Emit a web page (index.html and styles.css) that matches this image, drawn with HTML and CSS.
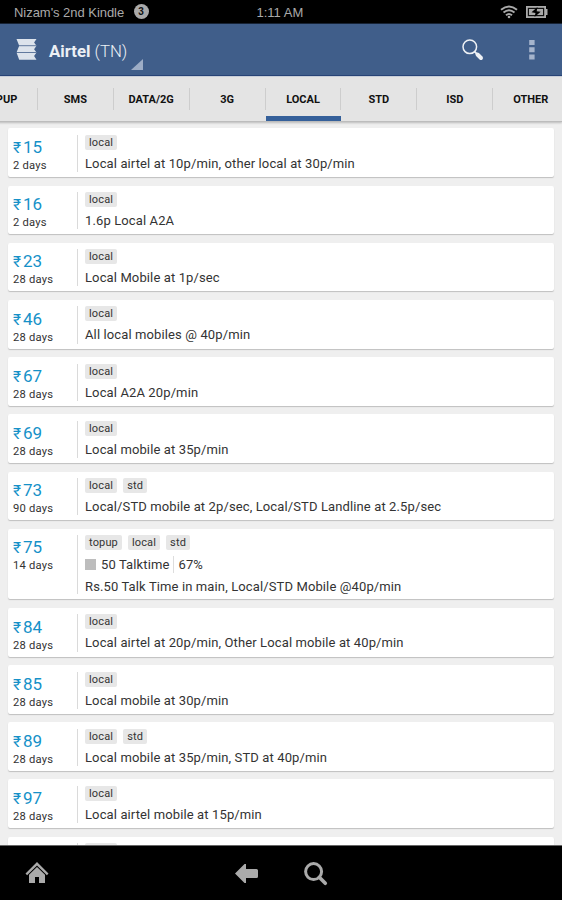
FILE: index.html
```html
<!DOCTYPE html>
<html lang="en">
<head>
<meta charset="utf-8">
<title>Airtel (TN)</title>
<link rel="stylesheet" href="styles.css">
</head>
<body>
<header class="status">
  <span class="device">Nizam's 2nd Kindle</span><span class="count">3</span>
  <span class="time">1:11 AM</span>
  <svg class="wifi" width="18" height="14" viewBox="0 0 18 14" fill="none" stroke="#aaa" stroke-width="1.9"><path d="M1 4.800Q9-2 17 4.800M3.500 7.600Q9 3 14.500 7.600M6 10.200Q9 7.600 12 10.200"/><circle cx="9" cy="12" r="1.3" fill="#aaa" stroke="none"/></svg>
  <svg class="battery" width="22" height="12" viewBox="0 0 22 12"><path fill="#aaa" d="M0 0h20v3h1.500v6H20v3H0z"/><path d="M1.800 1.800h16.400v8.400H1.800z" fill="#111"/><path d="M3 3h14v6H3z" fill="#aaa"/><path d="M11.500 1 5.500 6.300l4 .6L8.500 11l6.200-5.200-4-.6z" fill="#000"/></svg>
</header>
<nav class="bar">
  <svg class="logo" width="21" height="21" viewBox="0 0 21 21"><path fill="#dce3ec" d="M.5 0h20l-2.400 3.500 2.400 3.200-2.400 3.500 2.400 3.200-2.400 3.600 2.400 3.700H3.200L.5 13.500l2.700-6.800z"/><path d="M2 6.700h18.500M0 13.500h20.500" stroke="#405e8a" stroke-width=".8"/></svg>
  <h1 class="title"><b>Airtel</b> (TN)</h1>
  <svg class="spinner" width="12" height="12" viewBox="0 0 12 12"><path d="M12 0v11H0z" fill="#9dadc6"/></svg>
  <svg class="search" width="22" height="22" viewBox="0 0 22 22" fill="none" stroke="#eef1f5"><circle cx="7.800" cy="7.800" r="6.800" stroke-width="1.500"/><path d="m12.600 12.600 2.500 2.500" stroke-width="1.800"/><path d="m15.500 15.500 3.500 3.500" stroke-width="4" stroke-linecap="round"/></svg>
  <svg class="more" width="6" height="20" viewBox="0 0 6 20" fill="#a5b4cc"><path d="M.2 0h5.400v5H.2zM.2 7.200h5.400v5H.2zM.2 14.400h5.400v5H.2z"/></svg>
</nav>
<div class="tabs">
  <div class="tab"><span>TOPUP</span></div><div class="tab"><span>SMS</span></div><div class="tab"><span>DATA/2G</span></div><div class="tab"><span>3G</span></div><div class="tab active"><span>LOCAL</span></div><div class="tab"><span>STD</span></div><div class="tab"><span>ISD</span></div><div class="tab"><span>OTHER</span></div>
</div>
<main class="list">
  <article class="card"><div class="price"><b><i>₹</i>15</b><small>2 days</small></div><div class="info"><div class="tags"><span>local</span></div><p>Local airtel at 10p/min, other local at 30p/min</p></div></article>
  <article class="card"><div class="price"><b><i>₹</i>16</b><small>2 days</small></div><div class="info"><div class="tags"><span>local</span></div><p>1.6p Local A2A</p></div></article>
  <article class="card"><div class="price"><b><i>₹</i>23</b><small>28 days</small></div><div class="info"><div class="tags"><span>local</span></div><p>Local Mobile at 1p/sec</p></div></article>
  <article class="card"><div class="price"><b><i>₹</i>46</b><small>28 days</small></div><div class="info"><div class="tags"><span>local</span></div><p>All local mobiles @ 40p/min</p></div></article>
  <article class="card"><div class="price"><b><i>₹</i>67</b><small>28 days</small></div><div class="info"><div class="tags"><span>local</span></div><p>Local A2A 20p/min</p></div></article>
  <article class="card"><div class="price"><b><i>₹</i>69</b><small>28 days</small></div><div class="info"><div class="tags"><span>local</span></div><p>Local mobile at 35p/min</p></div></article>
  <article class="card"><div class="price"><b><i>₹</i>73</b><small>90 days</small></div><div class="info"><div class="tags"><span>local</span><span>std</span></div><p>Local/STD mobile at 2p/sec, Local/STD Landline at 2.5p/sec</p></div></article>
  <article class="card tall"><div class="price"><b><i>₹</i>75</b><small>14 days</small></div><div class="info"><div class="tags"><span>topup</span><span>local</span><span>std</span></div><div class="talk"><span class="swatch"></span><span class="amount">50 Talktime</span><span class="percent">67%</span></div><p>Rs.50 Talk Time in main, Local/STD Mobile @40p/min</p></div></article>
  <article class="card"><div class="price"><b><i>₹</i>84</b><small>28 days</small></div><div class="info"><div class="tags"><span>local</span></div><p>Local airtel at 20p/min, Other Local mobile at 40p/min</p></div></article>
  <article class="card"><div class="price"><b><i>₹</i>85</b><small>28 days</small></div><div class="info"><div class="tags"><span>local</span></div><p>Local mobile at 30p/min</p></div></article>
  <article class="card"><div class="price"><b><i>₹</i>89</b><small>28 days</small></div><div class="info"><div class="tags"><span>local</span><span>std</span></div><p>Local mobile at 35p/min, STD at 40p/min</p></div></article>
  <article class="card"><div class="price"><b><i>₹</i>97</b><small>28 days</small></div><div class="info"><div class="tags"><span>local</span></div><p>Local airtel mobile at 15p/min</p></div></article>
  <article class="card"><div class="price"></div><div class="info"><div class="tags"><span>local</span></div></div></article>
</main>
<footer class="nav">
  <svg class="home" width="24" height="22" viewBox="0 0 24 22" fill="#aaa"><path d="M12 0 .5 11.500l1.600 1.800L12 3.600l9.900 9.700 1.600-1.800z"/><path d="M12 5 4 12.800V21h6v-6h4v6h6v-8.200z"/></svg>
  <svg class="back" width="23" height="19" viewBox="0 0 23 19" fill="#aaa"><path d="M0 9.500 9.500 0H11v5h10.500q1.500 0 1.500 1.500v6q0 1.500-1.500 1.500H11v5H9.500z"/></svg>
  <svg class="find" width="24" height="24" viewBox="0 0 24 24" fill="none" stroke="#aaa"><circle cx="9.600" cy="9.600" r="8" stroke-width="3"/><path d="m15.300 15.300 6 6" stroke-width="3.600" stroke-linecap="round"/></svg>
</footer>
</body>
</html>
```
FILE: styles.css
```css
* { box-sizing: border-box; }
body {
  margin: 0;
  width: 562px;
  height: 900px;
  overflow: hidden;
  display: flex;
  flex-direction: column;
  background: #efefef;
  font-family: Roboto, "Liberation Sans", sans-serif;
}
svg { display: block; flex: none; }

.status {
  height: 24px;
  flex: none;
  display: flex;
  align-items: center;
  background: #000;
  color: #aaa;
  font: 13px/24px "Liberation Sans", sans-serif;
  border-bottom: 1px solid #172335;
}
.device { width: 119.500px; margin: 2px 0 0 14px; white-space: nowrap; letter-spacing: -.04px; }
.count {
  width: 15px;
  height: 15px;
  border-radius: 50%;
  background: #aaa;
  color: #111;
  font-size: 10px;
  font-weight: bold;
  line-height: 15px;
  text-align: center;
}
.time { width: 50px; margin: 2px 0 0 108px; white-space: nowrap; }
.wifi { margin-left: 193px; }
.battery { margin-left: 8px; }

.bar {
  height: 52px;
  flex: none;
  display: flex;
  align-items: center;
  background: #405e8a;
  border-bottom: 1px solid #284578;
}
.logo { margin-left: 16px; }
.title {
  margin: 2px 0 0 12px;
  width: 82px;
  color: #ecf0f5;
  font-size: 16.800px;
  font-weight: 300;
  line-height: 24px;
  white-space: nowrap;
}
.title b { font-weight: 700; }
.spinner { margin-top: 31px; }
.search { margin-left: 318.500px; }
.more { margin-left: 45.500px; }

.tabs {
  height: 46px;
  flex: none;
  display: flex;
  margin-left: -38px;
  background: #e4e4e4;
  border-top: 1px solid #c8ced8;
  border-bottom: 1px solid #bcbcbc;
  box-shadow: 0 1px 2px rgba(0, 0, 0, .22);
}
.tab {
  width: 75.900px;
  flex: none;
  display: flex;
  align-items: center;
  justify-content: center;
  border-bottom: 5px solid transparent;
  color: #111;
  font-size: 11px;
  font-weight: 700;
}
.tab span {
  width: 100%;
  height: 22px;
  line-height: 23px;
  margin-top: 5px;
  text-align: center;
  border-right: 1px solid #cdcdcd;
}
.tab.active { border-bottom-color: #35609a; }

.list {
  flex: 1;
  min-height: 0;
  overflow: hidden;
  display: flex;
  flex-direction: column;
  gap: 8.500px;
  padding: 6.400px 8px 0;
}
.card {
  height: 48.700px;
  flex: none;
  display: flex;
  padding: 6.500px 0 5px;
  background: #fff;
  border-radius: 2px;
  box-shadow: 0 1px 1px #bfbfbf;
}
.card.tall { height: 70.700px; }
.price {
  width: 70px;
  padding-left: 5px;
  border-right: 1px solid #dadada;
}
.price b {
  display: flex;
  align-items: baseline;
  gap: 1px;
  height: 20px;
  margin-top: 1.200px;
  color: #1591c8;
  font-size: 17px;
  font-weight: 400;
  line-height: 22px;
}
.price i { width: 9px; font-size: 15.500px; font-style: normal; }
.price small {
  display: block;
  color: #333;
  font-size: 11.200px;
  line-height: 20px;
  letter-spacing: .2px;
}
.info { padding-left: 7px; }
.tags { display: flex; gap: 6px; height: 15px; }
.tags span {
  padding: 0 4px;
  background: #e7e7e7;
  border-radius: 2px;
  color: #333;
  font-size: 11px;
  line-height: 16px;
  letter-spacing: .15px;
}
.card p, .talk {
  margin: 5px 0 0;
  color: #333;
  font-size: 13px;
  line-height: 17px;
  letter-spacing: .12px;
  white-space: nowrap;
}
.talk { display: flex; align-items: center; margin-top: 6px; }
.swatch { width: 11px; height: 11px; margin-right: 5px; background: #bdbdbd; }
.percent { margin-left: 4px; padding-left: 4px; border-left: 1px solid #ddd; }

.nav {
  height: 55px;
  flex: none;
  display: flex;
  align-items: center;
  background: #000;
  border-top: 1px solid #666;
}
.home { margin-left: 25px; }
.back { margin-left: 186px; }
.find { margin-left: 46px; margin-top: 2px; }
```
